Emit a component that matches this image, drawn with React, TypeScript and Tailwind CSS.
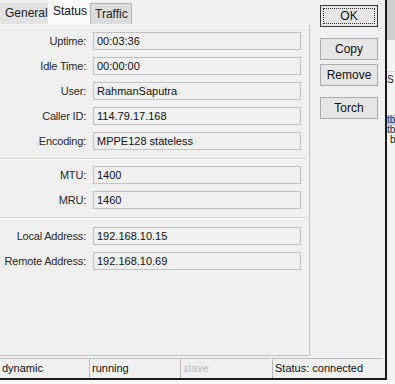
const group1 = [
  ['Uptime', '00:03:36'],
  ['Idle Time', '00:00:00'],
  ['User', 'RahmanSaputra'],
  ['Caller ID', '114.79.17.168'],
  ['Encoding', 'MPPE128 stateless'],
];
const group2 = [
  ['MTU', '1400'],
  ['MRU', '1460'],
];
const group3 = [
  ['Local Address', '192.168.10.15'],
  ['Remote Address', '192.168.10.69'],
];

function Field({ label, value }: { label: string; value: string }) {
  return (
    <div className="flex items-center h-[18px]">
      <div className="w-[88px] shrink-0 text-right pr-[2px] text-[#2a2a2a] whitespace-nowrap tracking-[-0.2px]">{label}:</div>
      <div className="ml-[5px] w-[208px] h-[18px] border border-[#c2c2c2] bg-[#f0f0f0] pl-[3px] leading-[16px] text-[#111]">
        {value}
      </div>
    </div>
  );
}

function Separator({ className }: { className: string }) {
  return <div className={'h-[2px] border-t border-[#d6d6d6] border-b border-b-white ' + className} />;
}

function Btn({ label, focus, className }: { label: string; focus?: boolean; className?: string }) {
  return (
    <div
      className={
        'w-[58px] h-[22px] flex items-center justify-center text-[12px] text-[#111] bg-[#e6e6e6] border ' +
        (focus ? 'border-[#3a3a3a] ' : 'border-[#adadad] ') +
        (className || '')
      }
    >
      {focus ? (
        <div className="w-[52px] h-[16px] border border-dotted border-[#333] flex items-center justify-center">{label}</div>
      ) : (
        label
      )}
    </div>
  );
}

export default function App() {
  return (
    <div
      className="w-[395px] h-[384px] bg-[#f7f7f7] overflow-hidden text-[11px] text-[#111]"
      style={{ fontFamily: '"Liberation Sans", Arial, sans-serif' }}
    >
      <div className="flex">
        {/* main window */}
        <div className="w-[387px] h-[380px] bg-[#f0f0f0] border-r-2 border-b-2 border-[#1a1a1a] flex flex-col">
          <div className="flex h-[356px]">
            {/* tabs + panel */}
            <div className="w-[310px] flex flex-col">
              <div className="flex items-end h-[24px] text-[12px]">
                <div className="w-[48px] h-[21px] bg-[#e3e3e3] pl-[5px] leading-[20px] text-[#222]">General</div>
                <div className="w-[42px] h-[24px] bg-[#fbfbfb] pl-[5px] leading-[22px] text-[#111]">Status</div>
                <div className="w-[42px] h-[21px] bg-[#dcdcdc] border border-[#b6b6b6] border-b-0 pl-[4px] leading-[20px] text-[#222]">Traffic</div>
              </div>
              <div className="flex-1 border-r border-b border-[#c3c3c3] border-t border-t-[#fbfbfb] pt-[7px]">
                <div className="flex flex-col gap-[7px]">
                  {group1.map(([l, v]) => (
                    <Field key={l} label={l} value={v} />
                  ))}
                </div>
                <Separator className="mt-[8px] mr-[4px]" />
                <div className="flex flex-col gap-[7px] mt-[6px]">
                  {group2.map(([l, v]) => (
                    <Field key={l} label={l} value={v} />
                  ))}
                </div>
                <Separator className="mt-[8px] mr-[4px]" />
                <div className="flex flex-col gap-[7px] mt-[8px]">
                  {group3.map(([l, v]) => (
                    <Field key={l} label={l} value={v} />
                  ))}
                </div>
              </div>
            </div>
            {/* buttons */}
            <div className="flex flex-col pl-[10px] pt-[5px]">
              <Btn label="OK" focus />
              <Btn label="Copy" className="mt-[11px]" />
              <Btn label="Remove" className="mt-[4px]" />
              <Btn label="Torch" className="mt-[11px]" />
            </div>
          </div>
          {/* status bar */}
          <div className="flex h-[22px] pt-[2px] text-[11px]">
            <div className="w-[88px] border-t border-[#bdbdbd] pl-[2px] leading-[18px] text-[#111]">dynamic</div>
            <div className="w-[90px] ml-[1px] border-t border-l border-[#bdbdbd] pl-[2px] leading-[18px] text-[#111]">running</div>
            <div className="w-[90px] ml-[1px] border-t border-l border-[#bdbdbd] pl-[2px] leading-[18px] text-[#bcbcbc]">slave</div>
            <div className="w-[110px] ml-[2px] border-t border-l border-[#bdbdbd] pl-[2px] leading-[18px] text-[#111]">Status: connected</div>
          </div>
        </div>
        {/* window behind, right edge */}
        <div className="w-[8px] h-[380px] overflow-hidden bg-[#f4f4f4] text-[10px] leading-[10px] flex flex-col">
          <div className="h-[40px] shrink-0 bg-[#cfcfcf]" />
          <div className="h-[32px] shrink-0 border-b border-[#d6d6d6]" />
          <div className="mt-[3px] h-[11px] shrink-0 overflow-hidden text-[#222] whitespace-nowrap">S</div>
          <div className="mt-[29px] h-[10px] shrink-0 overflow-hidden bg-[#b9cde6] text-[#1b3a73] whitespace-nowrap">tb</div>
          <div className="h-[10px] shrink-0 overflow-hidden text-[#222] whitespace-nowrap">tb</div>
          <div className="h-[10px] shrink-0 overflow-hidden pl-[3px] text-[#222] whitespace-nowrap">b</div>
        </div>
      </div>
    </div>
  );
}
